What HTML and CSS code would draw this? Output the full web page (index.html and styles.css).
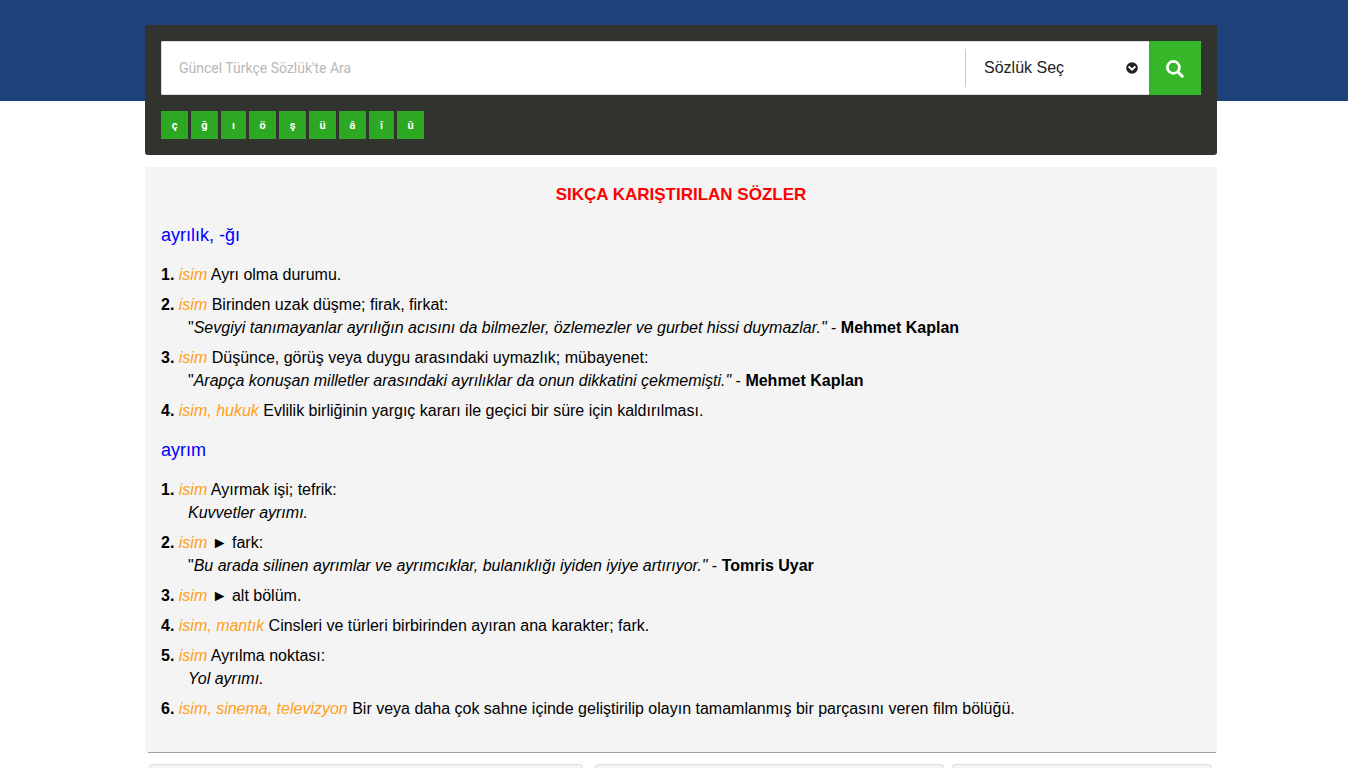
FILE: index.html
```html
<!DOCTYPE html>
<html lang="tr">
<head>
<meta charset="utf-8">
<title>Güncel Türkçe Sözlük</title>
<link rel="stylesheet" href="styles.css">
</head>
<body>
<div class="banner"></div>
<main class="page">
  <form class="search">
    <div class="search-bar">
      <input class="search-input" type="text" aria-label="Aranacak söz" placeholder="Güncel Türkçe Sözlük'te Ara">
      <div class="picker">
        <select class="picker-select" aria-label="Sözlük">
          <option>Sözlük Seç</option>
        </select>
        <svg class="picker-icon" viewBox="0 0 12 12" aria-hidden="true"><circle cx="6" cy="6" r="5.8" fill="#222"/><path d="M2.6 4.4 6 7.7 9.4 4.4" fill="none" stroke="#fff" stroke-width="2"/></svg>
      </div>
      <button class="search-button" type="submit" aria-label="Ara">
        <svg class="search-icon" viewBox="0 0 18 18" aria-hidden="true"><circle cx="7.4" cy="7.4" r="6" fill="none" stroke="#fff" stroke-width="2.7"/><path d="m11.8 11.8 4.4 4.4" stroke="#fff" stroke-width="3" stroke-linecap="round"/></svg>
      </button>
    </div>
    <div class="letters">
      <button class="letter" type="button">ç</button>
      <button class="letter" type="button">ğ</button>
      <button class="letter letter-narrow" type="button">ı</button>
      <button class="letter" type="button">ö</button>
      <button class="letter" type="button">ş</button>
      <button class="letter" type="button">ü</button>
      <button class="letter" type="button">â</button>
      <button class="letter letter-narrow" type="button">î</button>
      <button class="letter" type="button">û</button>
    </div>
  </form>
  <section class="words">
    <h1 class="title">SIKÇA KARIŞTIRILAN SÖZLER</h1>
    <h2 class="word">ayrılık, -ğı</h2>
    <div class="meanings">
      <p class="meaning"><b>1.</b> <i class="kind">isim</i> Ayrı olma durumu.</p>
      <div class="meaning"><b>2.</b> <i class="kind">isim</i> Birinden uzak düşme; firak, firkat:
        <p class="example">"<i>Sevgiyi tanımayanlar ayrılığın acısını da bilmezler, özlemezler ve gurbet hissi duymazlar."</i> - <b>Mehmet Kaplan</b></p></div>
      <div class="meaning"><b>3.</b> <i class="kind">isim</i> Düşünce, görüş veya duygu arasındaki uymazlık; mübayenet:
        <p class="example">"<i>Arapça konuşan milletler arasındaki ayrılıklar da onun dikkatini çekmemişti."</i> - <b>Mehmet Kaplan</b></p></div>
      <p class="meaning"><b>4.</b> <i class="kind">isim, hukuk</i> Evlilik birliğinin yargıç kararı ile geçici bir süre için kaldırılması.</p>
    </div>
    <h2 class="word">ayrım</h2>
    <div class="meanings">
      <div class="meaning"><b>1.</b> <i class="kind">isim</i> Ayırmak işi; tefrik:
        <p class="example"><i>Kuvvetler ayrımı.</i></p></div>
      <div class="meaning"><b>2.</b> <i class="kind">isim</i> ► fark:
        <p class="example">"<i>Bu arada silinen ayrımlar ve ayrımcıklar, bulanıklığı iyiden iyiye artırıyor."</i> - <b>Tomris Uyar</b></p></div>
      <p class="meaning"><b>3.</b> <i class="kind">isim</i> ► alt bölüm.</p>
      <p class="meaning"><b>4.</b> <i class="kind">isim, mantık</i> Cinsleri ve türleri birbirinden ayıran ana karakter; fark.</p>
      <div class="meaning"><b>5.</b> <i class="kind">isim</i> Ayrılma noktası:
        <p class="example"><i>Yol ayrımı.</i></p></div>
      <p class="meaning"><b>6.</b> <i class="kind">isim, sinema, televizyon</i> Bir veya daha çok sahne içinde geliştirilip olayın tamamlanmış bir parçasını veren film bölüğü.</p>
    </div>
  </section>
  <hr class="rule">
  <div class="cards">
    <div class="card card-wide"></div>
    <div class="card card-medium"></div>
    <div class="card card-narrow"></div>
  </div>
</main>
</body>
</html>
```

FILE: styles.css
```css
* {
  box-sizing: border-box;
}

body {
  display: flex;
  flex-direction: column;
  min-height: 100vh;
  margin: 0;
  background: #fff;
  color: #000;
  font: 16px/23px "Liberation Sans", Arial, sans-serif;
}

h1, h2, p {
  margin: 0;
}

.banner {
  height: 101px;
  background: #1e4179;
}

.page {
  display: flex;
  flex: 1;
  flex-direction: column;
  margin: -76px 131px 0 145px;
}

.search {
  padding: 16px;
  border-radius: 3px;
  background: #31332e;
}

.search-bar {
  display: flex;
  height: 54px;
  overflow: hidden;
  border-radius: 2px;
  background: #fff;
  box-shadow: inset 0 0 0 1px #ddd;
}

.search-input {
  flex: 1;
  min-width: 0;
  padding: 0 18px;
  border: 0;
  background: transparent;
  color: #333;
  font: 14px Roboto, sans-serif;
}

.search-input::placeholder {
  color: #b8b8b8;
}

.picker {
  position: relative;
  width: 184px;
  margin: 8px 0;
  border-left: 1px solid #ccc;
}

.picker-select {
  width: 100%;
  height: 100%;
  padding: 0 40px 2px 18px;
  border: 0;
  appearance: none;
  background: transparent;
  color: #222;
  font: inherit;
}

.picker-icon {
  position: absolute;
  top: 13px;
  right: 11px;
  width: 12px;
  height: 12px;
  pointer-events: none;
}

.search-button {
  display: grid;
  place-items: center;
  width: 52px;
  padding: 2px 0 0;
  border: 0;
  background: #35b729;
}

.search-icon {
  width: 18px;
  height: 18px;
}

.letters {
  display: flex;
  gap: 3px;
  margin-top: 16px;
}

.letter {
  width: 27px;
  height: 28px;
  padding: 0;
  border: 0;
  background: #2ca823;
  color: #fff;
  font: bold 11px Roboto, sans-serif;
}

.letter-narrow {
  width: 25px;
}

.words {
  margin-top: 12px;
  padding: 16px 16px 26px;
  background: #f4f4f4;
}

.title {
  padding-bottom: 1px;
  color: #f00;
  font-size: 17px;
  line-height: 23px;
  text-align: center;
}

.word {
  margin: 16px 0;
  color: #00f;
  font-size: 18px;
  font-weight: 400;
  line-height: 24px;
}

.meaning {
  margin-bottom: 7px;
}

.kind {
  color: #ff9f1a;
}

.example {
  padding-left: 27px;
}

.rule {
  width: auto;
  align-self: stretch;
  margin: -1px 1px 11px 3px;
  border: 0;
  border-top: 1px solid #a0a0a0;
}

.cards {
  display: flex;
  flex: 1;
  margin: 0 5px 0 4px;
}

.card {
  border: 1px solid #ddd;
  border-bottom: 0;
  border-radius: 4px 4px 0 0;
  background: #f4f4f4;
}

.card-wide {
  flex: 434;
  margin-right: 12px;
}

.card-medium {
  flex: 349;
  margin-right: 8px;
}

.card-narrow {
  flex: 260;
}
```
